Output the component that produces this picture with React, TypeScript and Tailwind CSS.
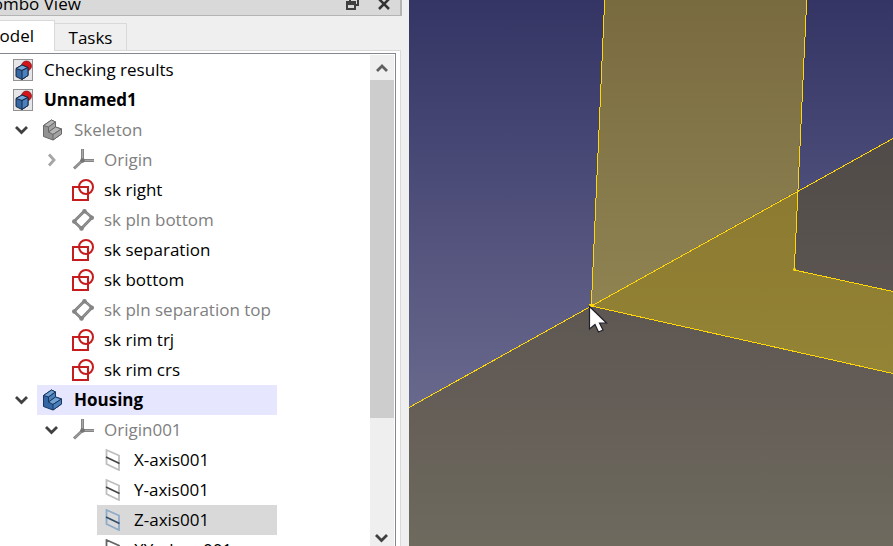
import React from "react";

type IconKind = "document" | "body" | "bodyActive" | "origin" | "sketch" | "datum" | "axis" | "axisSelected" | "plane";

type Node = {
  label: string;
  icon: IconKind;
  level: 0 | 1 | 2 | 3;
  open?: boolean;
  muted?: boolean;
  bold?: boolean;
  highlight?: "active" | "selected";
};

const nodes: Node[] = [
  { label: "Checking results", icon: "document", level: 0 },
  { label: "Unnamed1", icon: "document", level: 0, bold: true },
  { label: "Skeleton", icon: "body", level: 1, open: true, muted: true },
  { label: "Origin", icon: "origin", level: 2, open: false, muted: true },
  { label: "sk right", icon: "sketch", level: 2 },
  { label: "sk pln bottom", icon: "datum", level: 2, muted: true },
  { label: "sk separation", icon: "sketch", level: 2 },
  { label: "sk bottom", icon: "sketch", level: 2 },
  { label: "sk pln separation top", icon: "datum", level: 2, muted: true },
  { label: "sk rim trj", icon: "sketch", level: 2 },
  { label: "sk rim crs", icon: "sketch", level: 2 },
  { label: "Housing", icon: "bodyActive", level: 1, open: true, bold: true, highlight: "active" },
  { label: "Origin001", icon: "origin", level: 2, open: true, muted: true },
  { label: "X-axis001", icon: "axis", level: 3 },
  { label: "Y-axis001", icon: "axis", level: 3 },
  { label: "Z-axis001", icon: "axisSelected", level: 3, highlight: "selected" },
  { label: "XY-plane001", icon: "plane", level: 3 },
];

const indents = ["pl-0", "pl-[30px]", "pl-[60px]", "pl-[90px]"];

function BodyShape({ top, front, side, line }: { top: string; front: string; side: string; line: string }) {
  return (
    <g stroke={line} strokeWidth="1" strokeLinejoin="round">
      <path d="M1.5 6.5 9.5 1 13.5 3V8L19.5 10V15L11 21 1.5 17.5Z" fill={front} />
      <path d="M1.5 6.5 9.5 1 13.5 3 6.5 8Z" fill={top} />
      <path d="M6.5 8 13.5 3V8L6.5 13Z" fill={side} />
      <path d="M6.5 13 13.5 8 19.5 10 11 15.5Z" fill={top} />
      <path d="M11 15.5 19.5 10V15L11 21Z" fill={side} />
    </g>
  );
}

function TreeIcon({ kind }: { kind: IconKind }) {
  return (
    <svg viewBox="0 0 22 22" className="h-[22px] w-[22px] shrink-0" fill="none" aria-hidden="true">
      {kind === "document" && (
        <>
          <rect x="1.5" y=".5" width="19" height="21" fill="#e6e6e8" stroke="#929292" />
          <circle cx="14.5" cy="7" r="5" fill="#d3141b" stroke="#7d1015" strokeWidth=".7" />
          <g stroke="#16263f" strokeWidth="1" strokeLinejoin="round">
            <path d="M4 9.5 10 6 16 8.5V16.5L10 20.5 4 17.5Z" fill="#3567a4" />
            <path d="M4 9.5 10 6 16 8.5 10 11.5Z" fill="#76a5d7" />
            <path d="M10 11.5 16 8.5V16.5L10 20.5Z" fill="#4a80bf" />
          </g>
        </>
      )}
      {kind === "body" && <BodyShape top="#b5b5b5" front="#929292" side="#a3a3a3" line="#686868" />}
      {kind === "bodyActive" && <BodyShape top="#71a1d3" front="#3465a4" side="#4c80ba" line="#17375e" />}
      {kind === "origin" && (
        <g>
          <path d="M10.5 11.5V0M10.5 11.5H22.5M10.5 11.5 2 19.5" stroke="#858585" strokeWidth="3" />
          <path d="M10.5 11.5V.5M10.5 11.5H22M10.5 11.5 2.5 19" stroke="#a8a8a8" strokeWidth="1" />
          <circle cx="10.5" cy="11.5" r="2.3" fill="#747474" />
        </g>
      )}
      {kind === "sketch" && (
        <g stroke="#c51c1e" strokeWidth="2">
          <rect x="1" y="8" width="15" height="13" />
          <circle cx="14" cy="8" r="7" />
        </g>
      )}
      {kind === "datum" && (
        <g>
          <path d="M12.5 2 20 8.5 9.5 19.5 2 12.5Z" stroke="#7e7e7e" strokeWidth="2.8" />
          <path d="M12.5 2 20 8.5 9.5 19.5 2 12.5Z" stroke="#a5a5a5" strokeWidth=".8" />
          <g fill="#858585">
            <circle cx="12.5" cy="2.3" r="2.3" />
            <circle cx="19.7" cy="8.7" r="2.3" />
            <circle cx="9.5" cy="19.5" r="2.3" />
            <circle cx="2.3" cy="12.5" r="2.3" />
          </g>
        </g>
      )}
      {(kind === "axis" || kind === "axisSelected") && (
        <g>
          <path d="M4.5 1 17 6.5V21L4.5 15Z" stroke={kind === "axis" ? "#c1bdbf" : "#8eabc9"} strokeWidth="1.8" />
          <path d="M4 8 17.5 14.5" stroke={kind === "axis" ? "#444" : "#304d6b"} strokeWidth="1.6" />
        </g>
      )}
      {kind === "plane" && <path d="M4.5 1 17 6.5V21L4.5 15Z" stroke="#666" strokeWidth="1.8" />}
    </svg>
  );
}

function Chevron({ direction }: { direction: "up" | "down" | "right" }) {
  const paths = { up: "M2 10 7 5 12 10", down: "M1 4 6.5 9.5 12 4", right: "M4 1.5 9 7 4 12.5" };
  const colors = { up: "#606060", down: "#404040", right: "#a5a5a5" };
  return (
    <svg viewBox="0 0 14 14" className="h-3.5 w-3.5" fill="none" aria-hidden="true">
      <path d={paths[direction]} stroke={colors[direction]} strokeWidth="2.8" />
    </svg>
  );
}

function TreeRow({ node }: { node: Node }) {
  const fill = node.highlight === "active" ? "bg-[#e6e6ff]" : node.highlight === "selected" ? "bg-[#d9d9d9]" : "";
  const tone = node.muted ? "text-[#808080]" : "text-black";
  return (
    <li
      role="treeitem"
      aria-level={node.level + 1}
      aria-expanded={node.open}
      aria-selected={node.highlight === "selected"}
      className={`flex h-[30px] ${indents[node.level]}`}
    >
      <div className="flex w-[30px] shrink-0 items-center justify-center">
        {node.open !== undefined && (
          <button type="button" aria-label={`Toggle ${node.label}`} className="flex">
            <Chevron direction={node.open ? "down" : "right"} />
          </button>
        )}
      </div>
      <div className={`flex flex-1 items-center gap-2.5 pl-[5px] whitespace-nowrap ${fill} ${tone} ${node.bold ? "font-bold" : ""}`}>
        <TreeIcon kind={node.icon} />
        <span>{node.label}</span>
      </div>
    </li>
  );
}

function ComboView() {
  return (
    <aside className="flex w-[409px] shrink-0 flex-col overflow-hidden bg-[#efefef]">
      <header className="-mt-2 mr-[7px] flex h-6 shrink-0 items-center justify-between border-r-2 border-b border-[#b4b4b4] bg-[#d9d9d9] pr-2">
        <h1 className="-ml-[18px] leading-6">Combo View</h1>
        <div className="flex items-center gap-4">
          <button type="button" aria-label="Float panel" className="flex">
            <svg viewBox="0 0 16 16" className="h-4 w-4" fill="none" stroke="#404040" strokeWidth="2" aria-hidden="true">
              <path d="M6 5V2H14V9H11M3 6H11V13H3ZM3 8H11" />
            </svg>
          </button>
          <button type="button" aria-label="Close panel" className="flex">
            <svg viewBox="0 0 16 16" className="h-4 w-4" fill="none" stroke="#333" strokeWidth="2.5" aria-hidden="true">
              <path d="M3 3 13 13M13 3 3 13" />
            </svg>
          </button>
        </div>
      </header>
      <div role="tablist" className="flex h-[34px] shrink-0 items-end">
        <button type="button" role="tab" aria-selected="true" className="z-10 -mb-px -ml-[15px] flex h-[31px] w-[70px] items-center justify-end border-t border-r border-[#d9d9d9] bg-white pr-5">
          Model
        </button>
        <button type="button" role="tab" aria-selected="false" className="h-[27px] w-[72px] border-t border-r border-[#d9d9d9] pt-px">
          Tasks
        </button>
      </div>
      <div className="mr-2 flex min-h-0 flex-1 border-t border-r border-[#d9d9d9] bg-white pt-0.5 pr-1">
        <div className="flex min-w-0 flex-1 border-t border-r border-[#828790] pt-px">
          <ul role="tree" aria-label="Model" className="-ml-[23px] w-[300px]">
            {nodes.map((node) => (
              <TreeRow key={node.label} node={node} />
            ))}
          </ul>
          <div className="mr-px ml-auto flex w-6 flex-col bg-[#efefef]">
            <button type="button" aria-label="Scroll up" className="flex h-[25px] shrink-0 items-center justify-center">
              <Chevron direction="up" />
            </button>
            <div className="flex-1">
              <div className="h-3/4 bg-[#cdcdcd]" />
            </div>
            <button type="button" aria-label="Scroll down" className="flex h-4 shrink-0 items-center justify-center">
              <Chevron direction="down" />
            </button>
          </div>
        </div>
      </div>
    </aside>
  );
}

function Viewport() {
  return (
    <main className="min-w-0 flex-1 bg-[#6d6a5e]">
      <svg viewBox="0 0 484 546" preserveAspectRatio="xMinYMin slice" className="block h-full w-full" role="img" aria-label="3D view">
        <defs>
          <linearGradient id="sky" gradientUnits="userSpaceOnUse" x1="0" y1="0" x2="0" y2="408">
            <stop offset="0" stopColor="#353565" />
            <stop offset=".32" stopColor="#454573" />
            <stop offset="1" stopColor="#69698d" />
          </linearGradient>
          <linearGradient id="ground" gradientUnits="userSpaceOnUse" x1="0" y1="138" x2="0" y2="546">
            <stop offset="0" stopColor="#504a48" />
            <stop offset=".62" stopColor="#645d57" />
            <stop offset="1" stopColor="#6e6a5e" />
          </linearGradient>
          <linearGradient id="wall" gradientUnits="userSpaceOnUse" x1="0" y1="0" x2="0" y2="306">
            <stop offset="0" stopColor="#796b40" />
            <stop offset="1" stopColor="#8f8352" />
          </linearGradient>
          <linearGradient id="floor" gradientUnits="userSpaceOnUse" x1="0" y1="190" x2="0" y2="374">
            <stop offset="0" stopColor="#8b7a30" />
            <stop offset="1" stopColor="#948436" />
          </linearGradient>
        </defs>
        <rect width="484" height="546" fill="url(#sky)" />
        <path d="M0 407.5 182 306 484 138V546H0Z" fill="url(#ground)" />
        <path d="M195.5 0H397.5L388.5 190.5 182.5 306Z" fill="url(#wall)" />
        <path d="M182.5 306 388.5 191 385.5 270 484 291.5V373.5Z" fill="url(#floor)" />
        <g fill="none" stroke="#ffd60a" strokeWidth="1" shapeRendering="crispEdges">
          <path d="M0 407.5 182.5 306 484 138.5" />
          <path d="M195.7 0 182.3 306 484 373.5" />
          <path d="M397.7 0 385.3 270 484 291.5" />
        </g>
        <path d="M180 305H185M384 269.5H387" stroke="#ffd60a" strokeWidth="2" />
        <path d="M180.5 306.5V329L186 324.5 189.5 332 194 330 190.5 323H197.5Z" fill="#fff" stroke="#20202c" strokeWidth="1.2" />
      </svg>
    </main>
  );
}

export default function App() {
  return (
    <div className="flex h-screen overflow-hidden font-['Open_Sans','Noto_Sans',sans-serif] text-[17px] leading-6 text-black">
      <ComboView />
      <Viewport />
    </div>
  );
}
